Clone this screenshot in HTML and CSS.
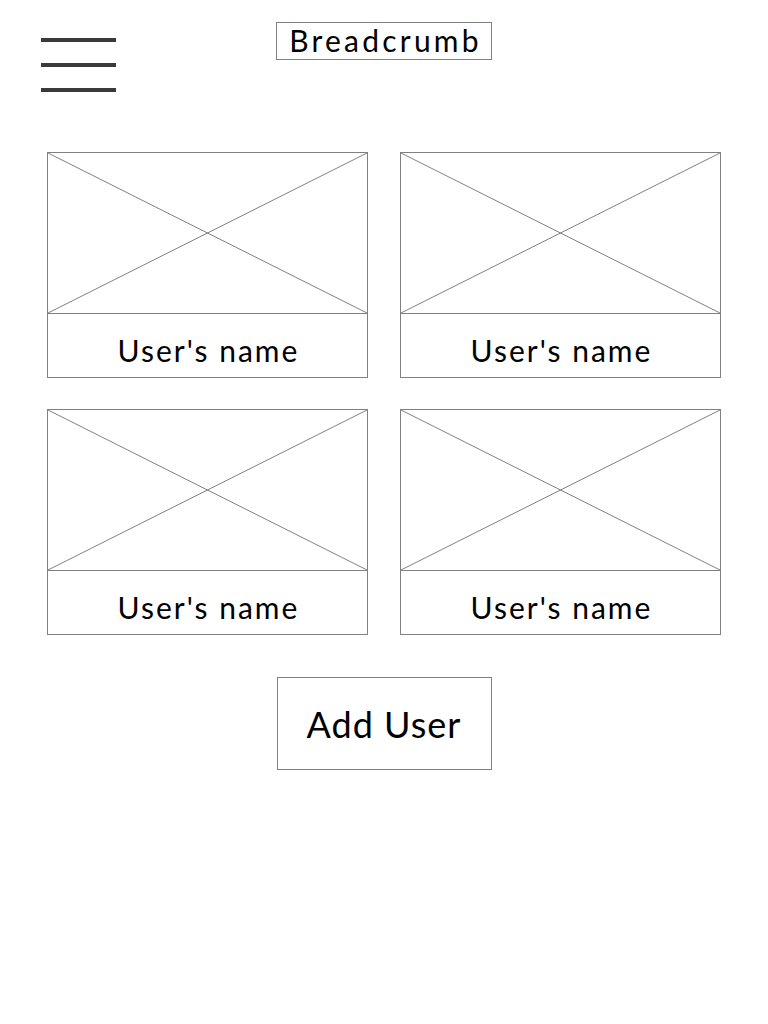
FILE: index.html
```html
<!DOCTYPE html>
<html lang="en">
<head>
    <meta charset="UTF-8">
    <meta name="viewport" content="width=device-width, initial-scale=1.0">
    <title>Users</title>
    <link rel="stylesheet" href="styles.css">
</head>
<body>
    <header class="top-bar">
        <div class="menu-icon">
            <span></span>
            <span></span>
            <span></span>
        </div>
        <div class="breadcrumb">Breadcrumb</div>
    </header>

    <main class="user-grid">
        <div class="user-card">
            <svg class="placeholder" viewBox="0 0 100 100" preserveAspectRatio="none">
                <line x1="0" y1="0" x2="100" y2="100" vector-effect="non-scaling-stroke"/>
                <line x1="100" y1="0" x2="0" y2="100" vector-effect="non-scaling-stroke"/>
            </svg>
            <div class="user-name">User's name</div>
        </div>
        <div class="user-card">
            <svg class="placeholder" viewBox="0 0 100 100" preserveAspectRatio="none">
                <line x1="0" y1="0" x2="100" y2="100" vector-effect="non-scaling-stroke"/>
                <line x1="100" y1="0" x2="0" y2="100" vector-effect="non-scaling-stroke"/>
            </svg>
            <div class="user-name">User's name</div>
        </div>
        <div class="user-card">
            <svg class="placeholder" viewBox="0 0 100 100" preserveAspectRatio="none">
                <line x1="0" y1="0" x2="100" y2="100" vector-effect="non-scaling-stroke"/>
                <line x1="100" y1="0" x2="0" y2="100" vector-effect="non-scaling-stroke"/>
            </svg>
            <div class="user-name">User's name</div>
        </div>
        <div class="user-card">
            <svg class="placeholder" viewBox="0 0 100 100" preserveAspectRatio="none">
                <line x1="0" y1="0" x2="100" y2="100" vector-effect="non-scaling-stroke"/>
                <line x1="100" y1="0" x2="0" y2="100" vector-effect="non-scaling-stroke"/>
            </svg>
            <div class="user-name">User's name</div>
        </div>
    </main>

    <div class="actions">
        <button class="add-user">Add User</button>
    </div>
</body>
</html>
```

FILE: styles.css
```css
:root {
    --line-color: #808080;
    --text-color: #000;
}

* {
    box-sizing: border-box;
    margin: 0;
    padding: 0;
}

body {
    font-family: 'Lato', 'Open Sans', sans-serif;
    color: var(--text-color);
    background: white;
    padding-top: 22px;
}

.top-bar {
    display: grid;
    grid-template-columns: 1fr auto 1fr;
    align-items: start;
}

.menu-icon {
    display: flex;
    flex-direction: column;
    gap: 21px;
    width: 75px;
    margin-left: 41px;
    margin-top: 16px;
}

.menu-icon span {
    display: block;
    height: 4px;
    background-color: #3a3a3a;
}

.breadcrumb {
    border: 1px solid var(--line-color);
    width: 216px;
    height: 38px;
    line-height: 35px;
    text-align: center;
    font-size: 30px;
    letter-spacing: 3.2px;
    text-indent: 3px;
}

.user-grid {
    display: grid;
    grid-template-columns: 321px 321px;
    gap: 31px 32px;
    justify-content: center;
    margin-top: 60px;
}

.user-card {
    border: 1px solid var(--line-color);
    display: flex;
    flex-direction: column;
}

.placeholder {
    display: block;
    width: 100%;
    height: 160px;
    border-bottom: 1px solid var(--line-color);
    box-sizing: content-box;
}

.placeholder line {
    stroke: var(--line-color);
    stroke-width: 1;
}

.user-name {
    height: 63px;
    padding-top: 14px;
    text-align: center;
    font-size: 30px;
    line-height: 44px;
    letter-spacing: 2px;
    text-indent: 2px;
}

.actions {
    display: flex;
    justify-content: center;
    margin-top: 42px;
}

.add-user {
    width: 215px;
    height: 93px;
    border: 1px solid var(--line-color);
    background: white;
    font-family: inherit;
    font-size: 36px;
    letter-spacing: 1px;
    color: var(--text-color);
    cursor: pointer;
}
```
